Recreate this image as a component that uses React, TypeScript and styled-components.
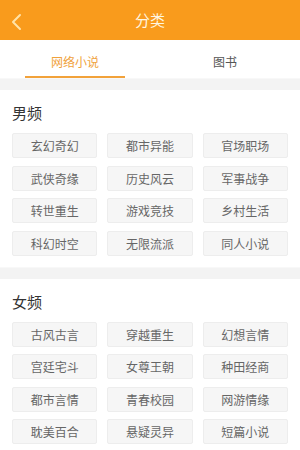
import React, { useState } from "react";
import styled, { createGlobalStyle } from "styled-components";

const GlobalStyle = createGlobalStyle`
  body {
    margin: 0;
    background: #fff;
    font-family: "Noto Sans CJK SC", "Noto Sans", sans-serif;
  }
`;

const Page = styled.div`
  width: 300px;
  background: #fff;
`;

const Header = styled.div`
  height: 40px;
  background: #f99b1c;
  display: flex;
  align-items: center;
  justify-content: center;
  position: relative;
`;

const BackButton = styled.div`
  position: absolute;
  left: 10px;
  top: 12px;
  width: 16px;
  height: 20px;
  display: flex;
  align-items: center;
`;

const Title = styled.div`
  color: #fff6e0;
  font-size: 15px;
  line-height: 20px;
`;

const Tabs = styled.div`
  height: 38px;
  display: flex;
`;

const Tab = styled.div<{ $active: boolean }>`
  flex: 1;
  display: flex;
  align-items: center;
  justify-content: center;
  padding-top: 4px;
  font-size: 12px;
  color: ${({ $active }) => ($active ? "#f0a23c" : "#555")};
  position: relative;
  &::after {
    content: "";
    display: ${({ $active }) => ($active ? "block" : "none")};
    position: absolute;
    left: 25px;
    right: 25px;
    bottom: 0;
    height: 2px;
    background: #f2a23a;
  }
`;

const Band = styled.div`
  height: 11px;
  background: #f3f3f3;
  border-top: 1px solid #f8f8f8;
`;

const Section = styled.div`
  padding: 13px 12px 11px;
`;

const SectionTitle = styled.div`
  font-size: 15px;
  line-height: 20px;
  color: #333;
  margin-bottom: 10px;
`;

const Grid = styled.div`
  display: grid;
  grid-template-columns: repeat(3, 1fr);
  column-gap: 10px;
  row-gap: 7.5px;
`;

const Chip = styled.div`
  height: 25px;
  box-sizing: border-box;
  background: #f6f6f6;
  border: 1px solid #ededed;
  border-radius: 2px;
  display: flex;
  align-items: center;
  justify-content: center;
  font-size: 12px;
  color: #666;
`;

const male = [
  "玄幻奇幻", "都市异能", "官场职场",
  "武侠奇缘", "历史风云", "军事战争",
  "转世重生", "游戏竞技", "乡村生活",
  "科幻时空", "无限流派", "同人小说",
];

const female = [
  "古风古言", "穿越重生", "幻想言情",
  "宫廷宅斗", "女尊王朝", "种田经商",
  "都市言情", "青春校园", "网游情缘",
  "耽美百合", "悬疑灵异", "短篇小说",
];

export default function App() {
  const [tab, setTab] = useState(0);
  return (
    <Page>
      <GlobalStyle />
      <Header>
        <BackButton>
          <svg width="12" height="18" viewBox="0 0 12 18">
            <path d="M10 2 L3 9 L10 16" fill="none" stroke="#ffe3a8" strokeWidth="2" strokeLinecap="round" strokeLinejoin="round" />
          </svg>
        </BackButton>
        <Title>分类</Title>
      </Header>
      <Tabs>
        <Tab $active={tab === 0} onClick={() => setTab(0)}>网络小说</Tab>
        <Tab $active={tab === 1} onClick={() => setTab(1)}>图书</Tab>
      </Tabs>
      <Band />
      <Section>
        <SectionTitle>男频</SectionTitle>
        <Grid>
          {male.map((m) => (
            <Chip key={m}>{m}</Chip>
          ))}
        </Grid>
      </Section>
      <Band />
      <Section>
        <SectionTitle>女频</SectionTitle>
        <Grid>
          {female.map((m) => (
            <Chip key={m}>{m}</Chip>
          ))}
        </Grid>
      </Section>
    </Page>
  );
}
